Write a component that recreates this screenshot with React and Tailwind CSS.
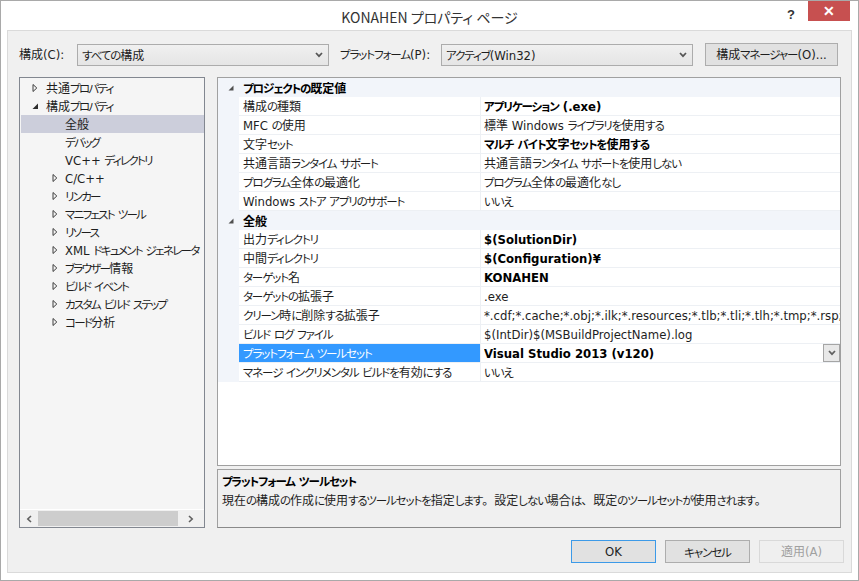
import React from "react";

const LATIN = "font-['DejaVu_Sans',sans-serif] text-[11.7px] tracking-normal";
const KANJI = "text-[12px] tracking-normal";
const PUNCT = "text-[12px] tracking-normal [font-feature-settings:normal]";
const KANA = "text-[11.5px] tracking-[-1.1px]";
const KANA_TIGHT = "text-[11.5px] tracking-[-1.7px]";

function T({ s, tight }) {
  const runs = [];
  let cur = null;
  let type = null;
  for (const ch of s) {
    const t = /[\x20-\x7E¥]/.test(ch)
      ? "l"
      : /[\u3400-\u9FFF]/.test(ch)
      ? "k"
      : /[。、]/.test(ch)
      ? "p"
      : "j";
    if (t !== type) {
      if (cur !== null) runs.push([type, cur]);
      cur = ch;
      type = t;
    } else cur += ch;
  }
  if (cur !== null) runs.push([type, cur]);
  return (
    <span className="whitespace-pre">
      {runs.map(([t, str], i) => (
        <span
          key={i}
          className={t === "l" ? LATIN : t === "k" ? KANJI : t === "p" ? PUNCT : tight ? KANA_TIGHT : KANA}
        >
          {str}
        </span>
      ))}
    </span>
  );
}

const treeItems = [
  { label: "共通プロパティ", level: 0, arrow: "closed" },
  { label: "構成プロパティ", level: 0, arrow: "open" },
  { label: "全般", level: 1, selected: true },
  { label: "デバッグ", level: 1 },
  { label: "VC++ ディレクトリ", level: 1 },
  { label: "C/C++", level: 1, arrow: "closed" },
  { label: "リンカー", level: 1, arrow: "closed" },
  { label: "マニフェスト ツール", level: 1, arrow: "closed" },
  { label: "リソース", level: 1, arrow: "closed" },
  { label: "XML ドキュメント ジェネレータ", level: 1, arrow: "closed" },
  { label: "ブラウザー情報", level: 1, arrow: "closed" },
  { label: "ビルド イベント", level: 1, arrow: "closed" },
  { label: "カスタム ビルド ステップ", level: 1, arrow: "closed" },
  { label: "コード分析", level: 1, arrow: "closed" },
];

const groups = [
  {
    title: "プロジェクトの既定値",
    rows: [
      { name: "構成の種類", value: "アプリケーション (.exe)", bold: true },
      { name: "MFC の使用", value: "標準 Windows ライブラリを使用する" },
      { name: "文字セット", value: "マルチ バイト文字セットを使用する", bold: true },
      { name: "共通言語ランタイム サポート", value: "共通言語ランタイム サポートを使用しない" },
      { name: "プログラム全体の最適化", value: "プログラム全体の最適化なし" },
      { name: "Windows ストア アプリのサポート", value: "いいえ" },
    ],
  },
  {
    title: "全般",
    rows: [
      { name: "出力ディレクトリ", value: "$(SolutionDir)", bold: true },
      { name: "中間ディレクトリ", value: "$(Configuration)¥", bold: true },
      { name: "ターゲット名", value: "KONAHEN", bold: true },
      { name: "ターゲットの拡張子", value: ".exe" },
      {
        name: "クリーン時に削除する拡張子",
        value:
          "*.cdf;*.cache;*.obj;*.ilk;*.resources;*.tlb;*.tli;*.tlh;*.tmp;*.rsp;*.pgc;*.pgd;*.meta;$(TargetPath)",
      },
      { name: "ビルド ログ ファイル", value: "$(IntDir)$(MSBuildProjectName).log" },
      { name: "プラットフォーム ツールセット", value: "Visual Studio 2013 (v120)", bold: true, selected: true },
      { name: "マネージ インクリメンタル ビルドを有効にする", value: "いいえ" },
    ],
  },
];

function Chevron({ color = "#555" }) {
  return (
    <svg width="8" height="6" viewBox="0 0 8 6">
      <polyline points="1,1 4,4.2 7,1" fill="none" stroke={color} strokeWidth="1.7" />
    </svg>
  );
}

function ClosedArrow() {
  return (
    <svg width="6" height="10" viewBox="0 0 6 10">
      <path d="M1 1.5 L4.8 5 L1 8.5 Z" fill="none" stroke="#3c3c3c" strokeWidth="1" />
    </svg>
  );
}

function OpenArrow() {
  return (
    <svg width="7" height="7" viewBox="0 0 7 7">
      <path d="M6 0.5 L6 6 L0.5 6 Z" fill="#2d2d2d" />
    </svg>
  );
}

function SmallOpenArrow() {
  return (
    <svg width="6" height="6" viewBox="0 0 6 6">
      <path d="M5.5 0.5 L5.5 5.5 L0.5 5.5 Z" fill="#505050" />
    </svg>
  );
}

function Select({ text }) {
  return (
    <div className="mt-[1px] flex h-[22px] w-[252px] shrink-0 items-center justify-between border border-[#acacac] bg-linear-to-b from-[#f0f0f0] to-[#e5e5e5] pl-[4px] pr-[5px]">
      <T s={text} />
      <Chevron />
    </div>
  );
}

function TreeRow({ item }) {
  const pad = item.level === 0 ? "pl-[11px]" : "pl-[31px]";
  const slot = item.level === 0 ? "w-[14px]" : "w-[13px]";
  return (
    <div className={`ml-[1px] flex h-[18px] items-center ${pad} ${item.selected ? "bg-[#cccedb]" : ""}`}>
      <div className={`flex ${slot} shrink-0 items-center`}>
        {item.arrow === "closed" && <ClosedArrow />}
        {item.arrow === "open" && <OpenArrow />}
      </div>
      <T s={item.label} tight />
    </div>
  );
}

function PropRow({ row }) {
  return (
    <div className="flex h-[19px]">
      <div className="w-[21px] shrink-0 bg-[#f2f5fa]" />
      <div
        className={`flex w-[242px] shrink-0 items-center overflow-hidden border-b border-r border-[#edf0f4] pl-[4px] ${
          row.selected ? "bg-[#3399ff] text-white" : "bg-white"
        }`}
      >
        <T s={row.name} />
      </div>
      <div className="flex min-w-0 flex-1 items-center border-b border-[#edf0f4] bg-white pl-[3px]">
        <div className={`min-w-0 flex-1 overflow-hidden ${row.bold ? "font-bold text-black" : ""}`}>
          <T s={row.value} />
        </div>
        {row.selected && (
          <div className="flex h-[18px] w-[17px] shrink-0 items-center justify-center border border-[#a5a5a5] bg-[#e8e8e8]">
            <Chevron color="#606060" />
          </div>
        )}
      </div>
    </div>
  );
}

function Button({ label, variant }) {
  const cls =
    variant === "default"
      ? "border-[#3c9ae8] bg-[#e1e1e1] text-[#1e1e1e]"
      : variant === "disabled"
      ? "border-[#d9d9d9] bg-[#efefef] text-[#a0a0a0]"
      : "border-[#adadad] bg-[#e1e1e1] text-[#1e1e1e]";
  return (
    <div className={`flex h-[23px] w-[85px] items-center justify-center border ${cls}`}>
      <T s={label} />
    </div>
  );
}

export default function App() {
  return (
    <div className="flex h-[581px] w-[859px] flex-col border border-[#a9a9a9] bg-white font-['Noto_Sans_CJK_JP',sans-serif] text-[12px] leading-[18px] text-[#1e1e1e] [font-feature-settings:'palt']">
      {/* title bar */}
      <div className="grid h-[29px] shrink-0 grid-cols-[1fr_auto_1fr]">
        <div />
        <div className="flex items-center pt-[2px] text-[14px] text-[#333]">KONAHEN プロパティ ページ</div>
        <div className="flex items-start justify-end pr-[8px]">
          <div className="mr-[13px] mt-[5px] font-['Liberation_Sans',sans-serif] text-[13px] font-bold text-[#333]">?</div>
          <div className="flex h-[20px] w-[42px] items-center justify-center bg-[#c75050] font-['Liberation_Sans',sans-serif] text-[14px] font-bold leading-none text-white">
            ✕
          </div>
        </div>
      </div>

      {/* client area */}
      <div className="mx-[6px] mb-[7px] flex flex-1 flex-col border border-[#dadada] bg-[#f0f0f0] pl-[11px] pr-[10px] pt-[12px]">
        {/* toolbar */}
        <div className="flex h-[23px] items-start">
          <div className="flex h-[23px] w-[58px] shrink-0 items-center">
            <T s="構成(C):" />
          </div>
          <Select text="すべての構成" />
          <div className="ml-[11px] flex h-[23px] w-[101px] shrink-0 items-center">
            <T s="プラットフォーム(P):" />
          </div>
          <Select text="アクティブ(Win32)" />
          <div className="ml-[12px] flex h-[23px] w-[133px] shrink-0 items-center justify-center border border-[#adadad] bg-[#e1e1e1]">
            <T s="構成マネージャー(O)..." />
          </div>
        </div>

        {/* body */}
        <div className="mt-[11px] flex h-[451px] gap-[12px]">
          {/* tree */}
          <div className="flex w-[186px] shrink-0 flex-col border border-[#828790] bg-[#f5f5f5]">
            <div className="flex-1 overflow-hidden pt-[1px]">
              {treeItems.map((it) => (
                <TreeRow key={it.label} item={it} />
              ))}
            </div>
            <div className="flex h-[18px] shrink-0 items-center border-t border-white bg-[#f0f0f0]">
              <div className="flex w-[18px] shrink-0 items-center justify-center">
                <svg width="6" height="8" viewBox="0 0 6 8">
                  <polyline points="5,1 1.8,4 5,7" fill="none" stroke="#606060" strokeWidth="1.6" />
                </svg>
              </div>
              <div className="h-[15px] w-[140px] shrink-0 bg-[#cdcdcd]" />
              <div className="flex flex-1 items-center justify-center">
                <svg width="6" height="8" viewBox="0 0 6 8">
                  <polyline points="1,1 4.2,4 1,7" fill="none" stroke="#606060" strokeWidth="1.6" />
                </svg>
              </div>
            </div>
          </div>

          {/* right column */}
          <div className="flex min-w-0 flex-1 flex-col gap-[3px]">
            <div className="flex-1 overflow-hidden border border-[#a0a0a0] bg-white">
              {groups.map((g) => (
                <div key={g.title}>
                  <div className="flex h-[19px] items-center bg-[#f2f5fa]">
                    <div className="flex w-[21px] shrink-0 items-center pl-[10px]">
                      <SmallOpenArrow />
                    </div>
                    <div className="pl-[4px] font-bold text-black">
                      <T s={g.title} />
                    </div>
                  </div>
                  {g.rows.map((r) => (
                    <PropRow key={r.name} row={r} />
                  ))}
                </div>
              ))}
            </div>
            <div className="h-[59px] shrink-0 border border-[#a0a0a0] border-b-[#8a8a8a] bg-[#f0f0f0] px-[4px] pt-[2px]">
              <div className="font-bold text-black">
                <T s="プラットフォーム ツールセット" />
              </div>
              <div>
                <T s="現在の構成の作成に使用するツールセットを指定します。設定しない場合は、既定のツールセットが使用されます。" />
              </div>
            </div>
          </div>
        </div>

        {/* buttons */}
        <div className="mr-[-3px] mt-[12px] flex justify-end gap-[9px]">
          <Button label="OK" variant="default" />
          <Button label="キャンセル" />
          <Button label="適用(A)" variant="disabled" />
        </div>
      </div>
    </div>
  );
}
